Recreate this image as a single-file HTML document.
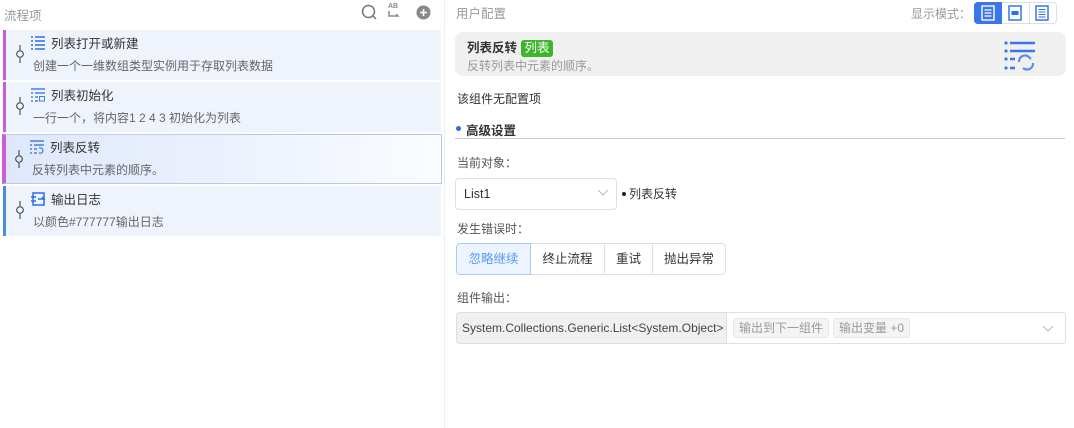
<!DOCTYPE html>
<html><head><meta charset="utf-8"><style>
*{box-sizing:border-box;margin:0;padding:0}
body{width:1074px;height:428px;background:#fff;font-family:"Liberation Sans","Noto Sans CJK SC",sans-serif;font-size:12px;color:#333;position:relative;overflow:hidden}
.abs{position:absolute}
.item{position:absolute;left:3px;width:438px;height:50px;background:#eef3fc;border-left:3px solid #c85fd6}
.item .t{position:absolute;left:45px;top:3px;font-size:12.5px;color:#333}
.item .d{position:absolute;left:27px;top:27px;font-size:12px;color:#666}
.item .pin{position:absolute;left:10px;top:15px;width:8px;height:18px}
.item .ic{position:absolute;left:24px;top:6px}
.btn{position:absolute;top:243px;height:32px;border:1px solid #dcdfe6;font-size:12.5px;line-height:30px;text-align:center;color:#333;background:#fff}
.tag{display:inline-block;border:1px solid #e4e6ea;background:#f4f4f5;color:#999;border-radius:3px;padding:0 5px;height:20px;line-height:18px;font-size:12px;margin-left:4px}
</style></head><body>
<div class="abs" style="left:444px;top:0;width:1px;height:428px;background:#eee"></div>
<div class="abs" style="left:4px;top:5px;font-size:12.5px;color:#999">流程项</div>
<svg class="abs" style="left:361px;top:4px" width="16" height="16"><circle cx="7.5" cy="7.5" r="6" fill="none" stroke="#777" stroke-width="1.5"/><path d="M12 12l3 3" stroke="#777" stroke-width="1.5"/></svg>
<div class="abs" style="left:388px;top:3px;font-size:7px;font-weight:bold;color:#888">AB</div>
<svg class="abs" style="left:387px;top:10px" width="14" height="9"><path d="M2 1v5h9l-2-2" fill="none" stroke="#888" stroke-width="1.4"/></svg>
<svg class="abs" style="left:416px;top:5px" width="15" height="15"><circle cx="7.5" cy="7.5" r="7" fill="#888"/><path d="M7.5 4v7M4 7.5h7" stroke="#fff" stroke-width="1.6"/></svg>

<div class="item" style="top:30px"><svg class="pin" viewBox="0 0 8 18"><path d="M4 0v5M4 13v5" stroke="#333"/><circle cx="4" cy="9" r="3.3" fill="none" stroke="#333"/></svg>
<svg class="ic" width="16" height="14"><path d="M1 1h2M5 1h10M1 5h2M5 5h10M1 9h2M5 9h10M1 13h2M5 13h10" stroke="#2b6de8" stroke-width="1.5"/></svg>
<div class="t">列表打开或新建</div><div class="d">创建一个一维数组类型实例用于存取列表数据</div></div>
<div class="item" style="top:82px"><svg class="pin" viewBox="0 0 8 18"><path d="M4 0v5M4 13v5" stroke="#333"/><circle cx="4" cy="9" r="3.3" fill="none" stroke="#333"/></svg>
<svg class="ic" width="16" height="14"><path d="M1 1h14M1 5h2M5 5h10M1 9h2M5 9h3M1 13h2M5 13h3" stroke="#4a80e0" stroke-width="1.5"/><rect x="9.5" y="8.5" width="5" height="4.5" fill="none" stroke="#4a80e0"/></svg>
<div class="t">列表初始化</div><div class="d">一行一个，将内容1 2 4 3 初始化为列表</div></div>
<div class="item" style="top:134px;left:2px;width:440px;background:linear-gradient(90deg,#dfe8fb,#eef3fd 60%,#fbfcff);border:1px solid #b5c8ee;border-left:4px solid #c85fd6"><svg class="pin" viewBox="0 0 8 18" style="left:9px"><path d="M4 0v5M4 13v5" stroke="#333"/><circle cx="4" cy="9" r="3.3" fill="none" stroke="#333"/></svg>
<svg class="ic" width="16" height="14" style="left:23px;top:5px"><path d="M1 1h14M1 5h2M5 5h10M1 9h2M5 9h3M1 13h2M5 13h3" stroke="#4a80e0" stroke-width="1.5"/><path d="M10 8a3 3 0 0 1 4 3M14 11a3 3 0 0 1-4 2" fill="none" stroke="#4a80e0" stroke-width="1.3"/></svg>
<div class="t" style="left:44px;top:2px">列表反转</div><div class="d" style="left:26px;top:26px">反转列表中元素的顺序。</div></div>
<div class="item" style="top:186px;border-left-color:#4a90d9"><svg class="pin" viewBox="0 0 8 18"><path d="M4 0v5M4 13v5" stroke="#333"/><circle cx="4" cy="9" r="3.3" fill="none" stroke="#333"/></svg>
<svg class="ic" width="16" height="15"><rect x="3" y="1" width="11" height="12" fill="none" stroke="#2b6de8" stroke-width="1.5"/><path d="M1 5h5M1 9h5M8 7h6l-2-2" stroke="#2b6de8" stroke-width="1.4" fill="none"/></svg>
<div class="t">输出日志</div><div class="d">以颜色#777777输出日志</div></div>

<div class="abs" style="left:456px;top:3px;font-size:12.5px;color:#999">用户配置</div>
<div class="abs" style="left:911px;top:5px;font-size:12px;color:#999">显示模式：</div>
<div class="abs" style="left:974px;top:2px;width:83px;height:22px;border:1px solid #dcdfe6;border-radius:4px"></div>
<div class="abs" style="left:974px;top:2px;width:28px;height:22px;background:#3a76ea;border-radius:4px 0 0 4px"></div>
<div class="abs" style="left:1029px;top:2px;width:1px;height:22px;background:#dcdfe6"></div>
<svg class="abs" style="left:981px;top:5px" width="14" height="16"><rect x="1" y="1" width="12" height="14" fill="none" stroke="#fff" stroke-width="1.4"/><path d="M3.5 5h7M3.5 8h7M3.5 11h7" stroke="#fff" stroke-width="1.3"/></svg>
<svg class="abs" style="left:1008px;top:5px" width="14" height="16"><rect x="1" y="1" width="12" height="14" fill="none" stroke="#2b6de8" stroke-width="1.4"/><rect x="3.5" y="6" width="7" height="4" fill="#2b6de8"/></svg>
<svg class="abs" style="left:1035px;top:5px" width="14" height="16"><rect x="1" y="1" width="12" height="14" fill="none" stroke="#2b6de8" stroke-width="1.4"/><path d="M3.5 4.5h7M3.5 7h7M3.5 9.5h7M3.5 12h7" stroke="#2b6de8" stroke-width="1"/></svg>

<div class="abs" style="left:455px;top:32px;width:611px;height:44px;background:#f0f0f0;border-radius:8px"></div>
<div class="abs" style="left:467px;top:37px;font-size:12.5px;font-weight:bold;color:#333">列表反转 <span style="display:inline-block;background:#3fb52c;color:#fff;font-weight:normal;border-radius:3px;padding:0 3px;height:17px;line-height:17px;margin-left:1px">列表</span></div>
<div class="abs" style="left:467px;top:57px;font-size:12px;color:#999">反转列表中元素的顺序。</div>
<svg class="abs" style="left:1004px;top:41px" width="32" height="32"><g fill="#3a76ea"><circle cx="2" cy="2" r="1.6"/><circle cx="2" cy="10" r="1.6"/><circle cx="2" cy="18" r="1.6"/><circle cx="2" cy="27" r="1.6"/></g><path d="M6 2h25M6 10h25M6 18h5M6 27h5" stroke="#3a76ea" stroke-width="2.4"/><path d="M15 21a6 6 0 0 1 10-5l2 2M29 22a6 6 0 0 1-10 5" fill="none" stroke="#5a8cf0" stroke-width="2.2"/></svg>

<div class="abs" style="left:457px;top:90px;font-size:12px;color:#333">该组件无配置项</div>
<div class="abs" style="left:456px;top:126px;width:5px;height:5px;border-radius:50%;background:#2b6de8"></div>
<div class="abs" style="left:466px;top:120px;font-size:12.5px;font-weight:bold;color:#333">高级设置</div>
<div class="abs" style="left:455px;top:138px;width:610px;height:1px;background:#ccc"></div>
<div class="abs" style="left:457px;top:154px;color:#555">当前对象：</div>
<div class="abs" style="left:455px;top:178px;width:162px;height:32px;border:1px solid #dcdfe6;border-radius:4px;padding:8px 0 0 8px;font-size:12.5px">List1</div>
<svg class="abs" style="left:597px;top:189px" width="12" height="8"><path d="M1 1l5 5 5-5" fill="none" stroke="#bbb"/></svg>
<div class="abs" style="left:622px;top:192px;width:4px;height:4px;border-radius:50%;background:#222"></div>
<div class="abs" style="left:629px;top:185px;font-size:12px">列表反转</div>
<div class="abs" style="left:457px;top:220px;color:#555">发生错误时：</div>
<div class="btn" style="left:456px;width:75px;background:#ecf5ff;border-color:#a6cdfa;color:#5b9af5;border-radius:4px 0 0 4px;z-index:1">忽略继续</div>
<div class="btn" style="left:530px;width:75px">终止流程</div>
<div class="btn" style="left:604px;width:49px">重试</div>
<div class="btn" style="left:652px;width:74px;border-radius:0 4px 4px 0">抛出异常</div>
<div class="abs" style="left:457px;top:289px;color:#555">组件输出：</div>
<div class="abs" style="left:456px;top:312px;width:610px;height:32px;border:1px solid #dcdfe6;border-radius:4px;overflow:hidden">
<div class="abs" style="left:0;top:0;width:270px;height:30px;background:#f0f0f0;border-right:1px solid #dcdfe6;padding:8px 0 0 5px;font-size:12px;color:#444;white-space:nowrap">System.Collections.Generic.List&lt;System.Object&gt;</div>
<div class="abs" style="left:272px;top:5px;white-space:nowrap"><span class="tag">输出到下一组件</span><span class="tag">输出变量 +0</span></div>
<svg class="abs" style="left:585px;top:12px" width="12" height="8"><path d="M1 1l5 5 5-5" fill="none" stroke="#bbb"/></svg>
</div>
</body></html>
